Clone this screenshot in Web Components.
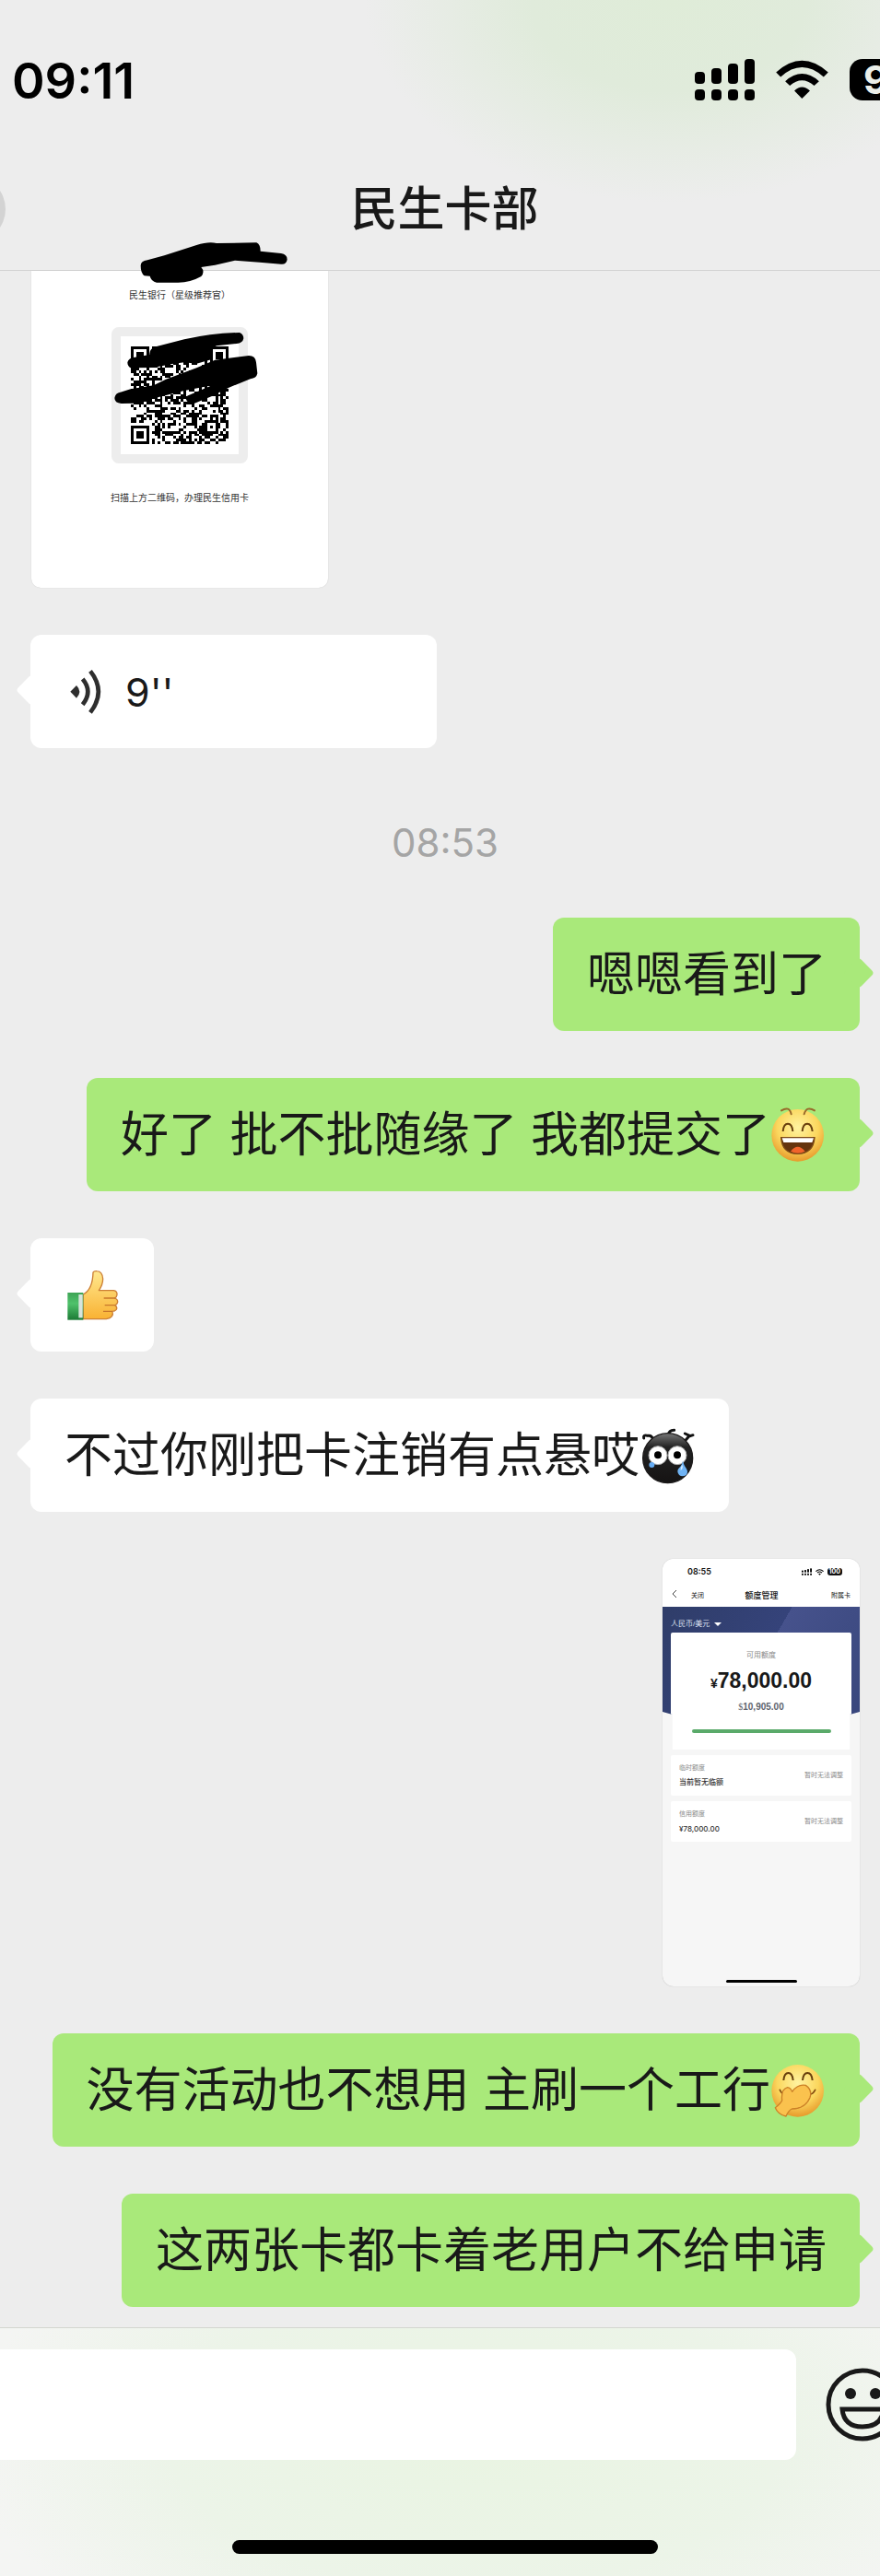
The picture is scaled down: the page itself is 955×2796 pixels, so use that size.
<!DOCTYPE html>
<html lang="zh-CN">
<head>
<meta charset="utf-8">
<meta name="viewport" content="width=device-width, initial-scale=1">
<title>民生卡部</title>
<style>
    body {
        margin: 0;
        background: #ededed;
        color: #191919;
        font-family: "Liberation Sans", "Noto Sans CJK SC", sans-serif;
    }
</style>
</head>
<body>

<chat-screen>
    <chat-header slot="header" name="民生卡部" time="09:11"></chat-header>

    <referral-card name="民生银行（星级推荐官）" hint="扫描上方二维码，办理民生信用卡"></referral-card>
    <voice-message seconds="9"></voice-message>
    <time-divider>08:53</time-divider>
    <chat-bubble mine>嗯嗯看到了</chat-bubble>
    <chat-bubble mine>好了 批不批随缘了 我都提交了<wx-emoji name="laugh"></wx-emoji></chat-bubble>
    <chat-bubble><wx-emoji name="thumb"></wx-emoji></chat-bubble>
    <chat-bubble>不过你刚把卡注销有点悬哎<wx-emoji name="soot"></wx-emoji></chat-bubble>
    <limit-screenshot></limit-screenshot>
    <chat-bubble mine>没有活动也不想用 主刷一个工行<wx-emoji name="giggle"></wx-emoji></chat-bubble>
    <chat-bubble mine>这两张卡都卡着老用户不给申请</chat-bubble>

    <chat-input slot="footer"></chat-input>
</chat-screen>

<script>
const signalIcon = `
    <svg class="signal" viewBox="0 0 65 45" aria-hidden="true">
        <rect x="0" y="14" width="11" height="13" rx="4"/><rect x="18" y="10" width="11" height="17" rx="4"/>
        <rect x="36" y="5" width="11" height="22" rx="4"/><rect x="54" y="0" width="11" height="27" rx="4"/>
        <rect x="0" y="33" width="11" height="12" rx="4"/><rect x="18" y="33" width="11" height="12" rx="4"/>
        <rect x="36" y="33" width="11" height="12" rx="4"/><rect x="54" y="33" width="11" height="12" rx="4"/>
    </svg>`;

const wifiIcon = `
    <svg class="wifi" viewBox="0 0 171 130" aria-hidden="true">
        <path d="M0 41Q85-36 171 41L156 56Q85-7 15 56Z"/>
        <path d="M30 70Q85 21 141 70L125 85Q85 49 45 85Z"/>
        <path d="M60 101Q85 78 111 101L85 127Z"/>
    </svg>`;

class ChatScreen extends HTMLElement {
    constructor() {
        super();
        this.attachShadow({ mode: 'open' });
        this.shadowRoot.innerHTML = `
            <style>
                :host { display: flex; flex-direction: column; min-height: 100vh; overflow: hidden; }
                main { flex: 1; display: flex; flex-direction: column; align-items: flex-start; gap: 51px; padding: 0 22px 22px 33px; }
            </style>
            <slot name="header"></slot>
            <main><slot></slot></main>
            <slot name="footer"></slot>
        `;
    }
}

class ChatHeader extends HTMLElement {
    constructor() {
        super();
        this.attachShadow({ mode: 'open' });
        this.shadowRoot.innerHTML = `
            <style>
                :host {
                    display: block;
                    border-bottom: 1px solid #d2d2d2;
                    background:
                        radial-gradient(ellipse 330px 220px at 76% 0, #dfecd8 0, #e0ebdb 45%, rgba(237, 237, 237, 0) 100%),
                        #ededed;
                }
                .status { display: flex; justify-content: space-between; align-items: center; height: 56px; padding: 60px 0 47px 13px; color: #000; }
                time { font: 600 54px/56px Inter, sans-serif; }
                .icons { display: flex; align-items: center; gap: 23px; margin: 0 -47px 4px 0; }
                .signal { width: 65px; height: 45px; }
                .wifi { width: 57px; height: 43px; }
                .battery { box-sizing: border-box; width: 80px; height: 45px; padding-left: 15px; border-radius: 14px; background: #000; color: #ebeee8; font: 700 42px/45px Inter, sans-serif; }
                .bar { position: relative; display: flex; justify-content: center; align-items: center; height: 130px; padding-left: 10px; }
                h1 { margin: 0; font-size: 51px; font-weight: 500; line-height: 64px; }
                button { position: absolute; left: -66px; top: 28px; width: 72px; height: 72px; padding: 0; border: 0; border-radius: 36px; background: #d3d3d3; }
            </style>
            <div class="status">
                <time></time>
                <div class="icons">${signalIcon}${wifiIcon}<span class="battery">9</span></div>
            </div>
            <div class="bar">
                <button type="button" aria-label="返回"></button>
                <h1></h1>
            </div>
        `;
    }

    connectedCallback() {
        this.shadowRoot.querySelector('time').textContent = this.getAttribute('time');
        this.shadowRoot.querySelector('h1').textContent = this.getAttribute('name');
    }
}

class ReferralCard extends HTMLElement {
    constructor() {
        super();
        this.attachShadow({ mode: 'open' });
        this.shadowRoot.innerHTML = `
            <style>
                :host {
                    position: relative; box-sizing: border-box; display: flex; flex-direction: column; align-items: center;
                    width: 322px; min-height: 344px; margin-left: 1px; padding-top: 19px;
                    border-radius: 0 0 10px 10px; background: #fff; box-shadow: 0 0 1px #bbb;
                }
                p { margin: 0; font-size: 10px; line-height: 16px; color: #333; }
                .frame { margin: 26px 0 30px; padding: 11px; border: 10px solid #ededed; border-radius: 8px; }
                .qr { display: block; width: 106px; height: 106px; }
                .scribble { position: absolute; left: 0; top: -34px; width: 300px; height: 200px; }
            </style>
            <p class="name"></p>
            <div class="frame"><svg class="qr" viewBox="0 0 37 37" shape-rendering="crispEdges" role="img" aria-label="二维码"><path/></svg></div>
            <p class="hint"></p>
            <svg class="scribble" viewBox="102 30 900 600" aria-hidden="true">
                <path d="M458 115Q458 100 480 97L535 82L640 48Q680 35 705 42L835 40Q848 45 848 68L915 75Q935 78 935 95Q932 112 915 110L845 104L765 98L700 113L655 120Q668 135 655 150Q620 170 580 170L510 170Q492 166 488 149L470 148Q458 140 458 115Z"/>
                <path d="M415 430Q418 415 440 413L487 405Q485 385 510 378L600 355Q690 335 780 333Q793 338 793 352Q790 368 770 369L705 376Q685 385 690 400L690 420L640 434L600 430L560 435L500 447L425 448Q415 442 415 430Z"/>
                <path d="M373 546Q375 530 392 527L425 517L500 505L540 485L640 448L700 422L810 408Q832 408 834 430L838 466Q835 482 815 484L745 512L690 540L630 565Q610 565 605 548Q607 538 620 535L690 505L600 522L520 542L440 563L395 564Q373 562 373 546Z"/>
            </svg>
        `;
    }

    connectedCallback() {
        this.shadowRoot.querySelector('.name').textContent = this.getAttribute('name');
        this.shadowRoot.querySelector('.hint').textContent = this.getAttribute('hint');
        this.shadowRoot.querySelector('.qr path').setAttribute('d', this.modules());
    }

    // placeholder code pattern, 37 x 37
    modules() {
        const size = 37;
        let seed = 4711;
        let d = '';
        const ring = (x, y, cx, cy) => Math.max(Math.abs(x - cx), Math.abs(y - cy));
        for (let y = 0; y < size; y++) {
            for (let x = 0; x < size; x++) {
                seed = (seed * 1103515245 + 12345) % 2147483648;
                let dark = seed / 2147483648 < 0.52;
                const finder = Math.min(ring(x, y, 3, 3), ring(x, y, 33, 3), ring(x, y, 3, 33));
                const align = ring(x, y, 30, 30);
                if (finder <= 4) dark = finder === 3 || finder <= 1;
                else if (align <= 2) dark = align !== 1;
                if (dark) d += `M${x} ${y}h1v1h-1z`;
            }
        }
        return d;
    }
}

const bubbleStyle = `
    :host { position: relative; display: block; --bubble: #fff; }
    :host([mine]) { align-self: flex-end; --bubble: #a9e97a; }
    .bubble { position: relative; box-sizing: border-box; display: flex; align-items: center; min-height: 123px; padding: 26px 36px 26px 37px; border: 0; border-radius: 12px; background: var(--bubble); }
    .bubble::before { content: ""; position: absolute; left: -11px; top: 48px; width: 24px; height: 24px; border-radius: 4px; background: var(--bubble); transform: rotate(45deg); }
    :host([mine]) .bubble::before { left: auto; right: -11px; }
`;

class ChatBubble extends HTMLElement {
    constructor() {
        super();
        this.attachShadow({ mode: 'open' });
        this.shadowRoot.innerHTML = `
            <style>
                ${bubbleStyle}
                p { margin: 0; font-size: 52px; line-height: 70px; }
            </style>
            <div class="bubble"><p><slot></slot></p></div>
        `;
    }
}

class VoiceMessage extends HTMLElement {
    constructor() {
        super();
        this.attachShadow({ mode: 'open' });
        this.shadowRoot.innerHTML = `
            <style>
                ${bubbleStyle}
                button { width: 441px; gap: 26px; color: #191919; font: 400 43px/52px Inter, sans-serif; }
                svg { width: 40px; height: 50px; }
            </style>
            <button class="bubble" type="button">
                <svg viewBox="211 167 120 150" aria-hidden="true">
                    <path fill="#2e2e2e" d="M230 241L250 221Q270 241 250 262Z"/>
                    <path fill="none" stroke="#2e2e2e" stroke-width="14" d="M270 200Q304 241 270 283M295 174Q348 241 295 309"/>
                </svg>
                <span></span>
            </button>
        `;
    }

    connectedCallback() {
        this.shadowRoot.querySelector('span').textContent = this.getAttribute('seconds') + "''";
    }
}

class TimeDivider extends HTMLElement {
    constructor() {
        super();
        this.attachShadow({ mode: 'open' });
        this.shadowRoot.innerHTML = `
            <style>
                :host { display: block; align-self: center; padding-top: 22px; color: #a5a5a5; font: 400 42px/60px Inter, sans-serif; }
            </style>
            <time><slot></slot></time>
        `;
    }
}

const faceFill = `
    <defs><radialGradient id="face" cx=".5" cy=".35" r=".65">
        <stop offset="0" stop-color="#fff3a0"/><stop offset=".6" stop-color="#fbd75e"/><stop offset="1" stop-color="#e79a2b"/>
    </radialGradient></defs>`;

const emojis = {
    laugh: ['哈哈', '828 690 183 183', `
        ${faceFill}
        <circle cx="917" cy="781" r="85" fill="url(#face)"/>
        <path d="M864 700Q890 684 896 712M972 700Q946 684 938 712" fill="none" stroke="#996a2b" stroke-width="6" stroke-linecap="round"/>
        <path d="M869 768C872 735 898 735 901 768M932 768C935 735 961 735 965 768" fill="none" stroke="#683f0d" stroke-width="6"/>
        <path d="M863 788H972Q968 840 917 841Q866 840 863 788Z" fill="#65340e" stroke="#7d4a16" stroke-width="4"/>
        <path d="M866 790H969L964 804H871Z" fill="#fff"/>
        <path d="M894 833Q917 804 941 833Q917 845 894 833Z" fill="#f0632b"/>`],
    thumb: ['强', '210 192 183 183', `
        <defs>
            <linearGradient id="hand" x2="0" y2="1"><stop stop-color="#ffe88f"/><stop offset="1" stop-color="#f9b233"/></linearGradient>
            <linearGradient id="cuff" x2="0" y2="1"><stop stop-color="#3ea455"/><stop offset=".4" stop-color="#4fc26b"/><stop offset="1" stop-color="#1c7a35"/></linearGradient>
        </defs>
        <path d="M271 279Q302 262 303 207Q306 202 316 203Q333 204 335 228Q335 247 322 266H370Q382 268 381 280Q380 288 374 291Q384 295 383 304Q381 312 375 314Q383 321 379 328Q374 334 366 334Q372 355 346 359H271Z" fill="url(#hand)" stroke="#cc7f35" stroke-width="4" stroke-linejoin="round"/>
        <path d="M338 291H375M341 314H375M336 334H366" stroke="#c8772b" stroke-width="4"/>
        <path d="M220 273H271V362H220Z" fill="url(#cuff)"/>
        <path d="M256 279H269V355H256Z" fill="#d8e4dc"/>`],
    soot: ['裂开', '222 144 183 183', `
        <defs><linearGradient id="soot" x2="0" y2="1"><stop stop-color="#777"/><stop offset=".28" stop-color="#222"/><stop offset="1" stop-color="#151313"/></linearGradient></defs>
        <path d="M236 177Q233 165 249 169Q262 166 267 183M317 166Q316 152 335 151M370 186L385 169L370 162M383 171L396 167" fill="none" stroke="#111" stroke-width="9" stroke-linecap="round"/>
        <circle cx="314" cy="242" r="81" fill="url(#soot)" stroke="#1c1a1a" stroke-width="4"/>
        <g stroke="#aaa" stroke-width="3"><circle cx="282" cy="233" r="30" fill="#fff"/><circle cx="345" cy="233" r="30" fill="#fff"/></g>
        <circle cx="282" cy="232" r="12"/><circle cx="345" cy="232" r="12"/>
        <circle cx="262" cy="264" r="9" fill="#67adf4"/>
        <path d="M363 250C360 272 346 273 346 286Q348 301 363 301Q379 300 378 285C376 273 367 271 363 250Z" fill="#6fb3f4"/>
        <path d="M361 263Q354 274 356 282Q366 275 361 263Z" fill="#d5ecff"/>`],
    giggle: ['偷笑', '828 174 183 183', `
        ${faceFill}
        <circle cx="917" cy="265" r="85" fill="url(#face)"/>
        <path d="M871 231C874 199 899 199 902 231M933 231C936 199 962 199 965 231" fill="none" stroke="#683f0d" stroke-width="6"/>
        <path d="M859 262Q867 279 878 276M957 276Q967 276 974 262" fill="none" stroke="#80480f" stroke-width="5" stroke-linecap="round"/>
        <path d="M844 320Q862 306 866 296Q862 260 884 254Q894 255 899 268Q917 242 943 247Q965 262 957 287Q941 324 898 324Q887 329 879 348Q853 342 844 320Z" fill="#fac24e" stroke="#cc8127" stroke-width="4" stroke-linejoin="round"/>`]
};

class WxEmoji extends HTMLElement {
    constructor() {
        super();
        this.attachShadow({ mode: 'open' });
    }

    connectedCallback() {
        const [label, box, shapes] = emojis[this.getAttribute('name')];
        this.shadowRoot.innerHTML = `
            <style>
                :host { display: inline-block; height: 61px; vertical-align: -13px; }
                svg { display: block; width: 61px; height: 61px; }
            </style>
            <svg viewBox="${box}" role="img" aria-label="${label}">${shapes}</svg>
        `;
    }
}

class LimitScreenshot extends HTMLElement {
    constructor() {
        super();
        this.attachShadow({ mode: 'open' });
        this.shadowRoot.innerHTML = `
            <style>
                :host {
                    align-self: flex-end; box-sizing: border-box; display: flex; flex-direction: column;
                    width: 214px; height: 464px; overflow: hidden; border-radius: 12px;
                    background: #f6f6f6; box-shadow: 0 0 1px #aaa; font-size: 7px; line-height: 12px;
                }
                .status, nav { background: #fff; color: #111; }
                .status { display: flex; align-items: center; height: 28px; padding: 0 19px 0 27px; gap: 4px; }
                .status time { margin-right: auto; font: 600 9px/12px Inter, sans-serif; }
                .signal { width: 11px; height: 8px; }
                .wifi { width: 9px; height: 7px; }
                .battery { padding: 0 2px; border-radius: 3px; background: #111; color: #fff; font: 700 7px/8px Inter, sans-serif; }
                nav { display: grid; grid-template-columns: 1fr auto 1fr; align-items: center; height: 24px; padding: 0 10px 0 11px; }
                nav svg { width: 4px; height: 8px; fill: none; stroke: #444; margin-right: 16px; }
                nav b { font-size: 9px; font-weight: 500; }
                nav span:last-child { text-align: right; }
                .hero { padding: 10px 9px 0; background: linear-gradient(120deg, #2f3d69, #35437a 50%, #46528c 50%, #39477d) 0 0 / 100% 117px no-repeat; clip-path: polygon(0 0, 100% 0, 100% 114px, 95% 117px, 95% 100%, 5% 100%, 5% 117px, 0 114px); }
                .currency { display: flex; align-items: center; gap: 5px; height: 18px; color: #dde1f0; font-size: 8px; }
                .currency svg { width: 8px; height: 4px; fill: #fff; }
                .card { border-radius: 2px; background: #fff; }
                .total { display: flex; flex-direction: column; align-items: center; height: 127px; box-sizing: border-box; padding-top: 19px; }
                .total small { color: #888; font-size: 8px; }
                .total strong { margin: 7px 0 6px; font-size: 23px; line-height: 28px; white-space: nowrap; }
                .total strong i { font-size: 14px; font-style: normal; }
                .total b { color: #60646e; font-size: 10px; }
                .total b i { font-family: "Liberation Serif", serif; font-style: normal; font-weight: 400; }
                .meter { width: 151px; height: 4px; margin-top: 18px; border-radius: 2px; background: #5aaa6a; }
                .row { display: flex; justify-content: space-between; align-items: center; height: 44px; margin: 6px 9px 0; padding: 0 9px; color: #888; }
                .row div { display: grid; gap: 4px; }
                .row b { color: #333; font-size: 8px; font-weight: 500; }
                .row .amount { font-family: Inter, sans-serif; }
                .home { width: 77px; height: 3px; margin: auto auto 4px; border-radius: 2px; background: #000; }
            </style>
            <div class="status"><time>08:55</time>${signalIcon}${wifiIcon}<span class="battery">100</span></div>
            <nav><span><svg viewBox="0 0 4 8"><path d="M4 0L0 4L4 8"/></svg>关闭</span><b>额度管理</b><span>附属卡</span></nav>
            <div class="hero">
                <div class="currency">人民币/美元<svg viewBox="0 0 8 4"><path d="M0 0H8L4 4Z"/></svg></div>
                <div class="card total">
                    <small>可用额度</small>
                    <strong><i>¥</i>78,000.00</strong>
                    <b><i>$</i>10,905.00</b>
                    <div class="meter"></div>
                </div>
            </div>
            <div class="card row"><div><span>临时额度</span><b>当前暂无临额</b></div><span>暂时无法调整</span></div>
            <div class="card row"><div><span>信用额度</span><b class="amount">¥78,000.00</b></div><span>暂时无法调整</span></div>
            <div class="home"></div>
        `;
    }
}

class ChatInput extends HTMLElement {
    constructor() {
        super();
        this.attachShadow({ mode: 'open' });
        this.shadowRoot.innerHTML = `
            <style>
                :host {
                    display: block; border-top: 1px solid #d3d6d0;
                    background: radial-gradient(ellipse 58% 100% at 54% 45%, #e9f4e2 0, #ecf4e8 60%, rgba(244, 245, 243, 0) 100%), #f4f5f3;
                }
                form { display: flex; align-items: center; gap: 32px; margin-right: -22px; padding-top: 23px; overflow: hidden; }
                input { flex: 1; min-width: 0; box-sizing: border-box; height: 120px; padding: 0 32px; border: 0; border-radius: 0 12px 12px 0; background: #fff; color: inherit; font: inherit; font-size: 52px; }
                button { padding: 0; border: 0; background: none; }
                svg { display: block; width: 81px; height: 81px; }
                .bottom { display: flex; justify-content: center; padding: 87px 0 24px 10px; }
                .home { width: 462px; height: 15px; border-radius: 8px; background: #000; }
            </style>
            <form>
                <input type="text" aria-label="消息">
                <button type="button" aria-label="表情">
                    <svg viewBox="0 0 81 81" fill="none" stroke="#191919" stroke-width="5">
                        <circle cx="40" cy="40" r="37"/>
                        <path d="M18 45H63Q61 64 40 64Q20 64 18 45Z"/>
                        <g fill="#191919" stroke="none"><circle cx="27" cy="28" r="6"/><circle cx="54" cy="28" r="6"/></g>
                    </svg>
                </button>
            </form>
            <div class="bottom"><div class="home"></div></div>
        `;
    }
}

customElements.define('chat-screen', ChatScreen);
customElements.define('chat-header', ChatHeader);
customElements.define('referral-card', ReferralCard);
customElements.define('chat-bubble', ChatBubble);
customElements.define('voice-message', VoiceMessage);
customElements.define('time-divider', TimeDivider);
customElements.define('wx-emoji', WxEmoji);
customElements.define('limit-screenshot', LimitScreenshot);
customElements.define('chat-input', ChatInput);
</script>
</body>
</html>
